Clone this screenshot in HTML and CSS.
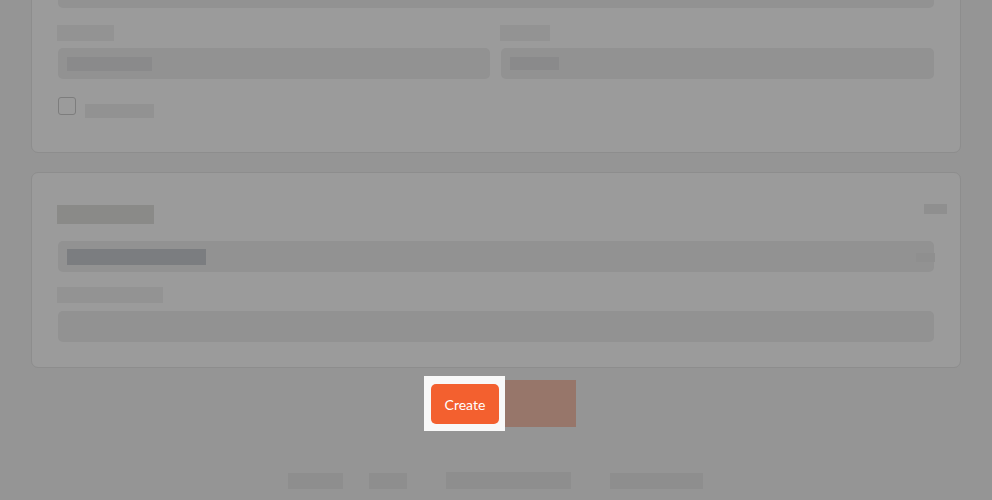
FILE: index.html
```html
<!DOCTYPE html>
<html lang="en">
<head>
<meta charset="utf-8">
<title>Create</title>
<link rel="stylesheet" href="styles.css">
</head>
<body>
<div class="page">
  <section class="card card-top">
    <div class="input full"></div>
    <div class="grid2">
      <div class="field">
        <div class="label lw1"></div>
        <div class="input"><span class="val vw1"></span></div>
      </div>
      <div class="field">
        <div class="label lw2"></div>
        <div class="input"><span class="val vw2"></span></div>
      </div>
    </div>
    <div class="check-row">
      <span class="checkbox"></span>
      <span class="check-label"></span>
    </div>
  </section>

  <section class="card card-second">
    <div class="title-row">
      <div class="title-block"></div>
      <div class="title-side"></div>
    </div>
    <div class="input select"><span class="sel-val"></span><span class="sel-arrow"></span></div>
    <div class="label lw3"></div>
    <div class="input"></div>
  </section>

  <div class="actions">
    <div class="spot"><button class="btn-create">Create</button></div>
    <div class="btn-next"></div>
  </div>

  <footer class="footer">
    <span class="fb f1"></span>
    <span class="fb f2"></span>
    <span class="fb f3"></span>
    <span class="fb f4"></span>
  </footer>
</div>
</body>
</html>
```

FILE: styles.css
```css
* { box-sizing: border-box; }
html, body { margin: 0; padding: 0; }
body {
  background: #959595;
  font-family: Lato, "Liberation Sans", sans-serif;
  width: 992px;
  height: 500px;
  overflow: hidden;
}
.page {
  padding: 0 31px;
  margin-top: -33px;
}
.card {
  background: #9b9b9b;
  border: 1px solid #8d8d8d;
  border-radius: 7px;
  padding: 0 26px;
}
.card-top {
  padding-top: 9px;
  padding-bottom: 34px;
}
.input {
  height: 31px;
  background: #929292;
  border-radius: 5px;
  display: flex;
  align-items: center;
  padding-left: 9px;
}
.grid2 {
  display: grid;
  grid-template-columns: 432px 433px;
  gap: 11px;
  margin-top: 17px;
}
.label {
  height: 16px;
  background: #939393;
  margin-left: -1px;
  margin-bottom: 7px;
}
.lw1 { width: 57px; }
.lw2 { width: 50px; }
.lw3 { width: 106px; margin-bottom: 8px; }
.val { display: block; height: 14px; background: #8a8a8b; }
.vw1 { width: 85px; }
.vw2 { width: 49px; height: 13px; }
.check-row {
  display: flex;
  align-items: flex-start;
  margin-top: 18px;
  height: 21px;
}
.checkbox {
  width: 18px;
  height: 18px;
  border: 1px solid #7d7d7d;
  border-radius: 3px;
}
.check-label {
  width: 69px;
  height: 14px;
  background: #929292;
  margin: 7px 0 0 9px;
}
.card-second {
  margin-top: 19px;
  padding-top: 32px;
  padding-bottom: 25px;
}
.title-row {
  display: flex;
  justify-content: space-between;
  align-items: flex-start;
  height: 19px;
  margin-bottom: 17px;
}
.title-block {
  width: 97px;
  height: 19px;
  background: #8a8a88;
  margin-left: -1px;
}
.title-side {
  width: 23px;
  height: 10px;
  background: #8f8f8f;
  margin-top: -1px;
  margin-right: -13px;
}
.select {
  position: relative;
  justify-content: space-between;
  margin-bottom: 15px;
}
.sel-val { width: 139px; height: 16px; background: #7b7d80; }
.sel-arrow { width: 19px; height: 9px; background: #8f8f8f; margin-right: -1px; margin-top: 1px; }
.actions {
  display: flex;
  justify-content: center;
  align-items: center;
  margin-top: 8px;
  padding-left: 8px;
}
.spot {
  background: #f8f8f8;
  padding: 8px 6px 7px 7px;
}
.btn-create {
  display: block;
  width: 68px;
  height: 40px;
  border: 0;
  border-radius: 5px;
  background: #f3602f;
  color: #ffffff;
  font-family: Lato, "Liberation Sans", sans-serif;
  font-size: 14px;
  padding: 0;
  margin: 0;
}
.btn-next {
  width: 71px;
  height: 47px;
  background: #97766a;
}
.footer {
  display: flex;
  justify-content: center;
  align-items: center;
  gap: 0;
  margin-top: 41px;
}
.fb { display: block; background: #8e8e8e; height: 16px; }
.f1 { width: 55px; margin-left: -2px; }
.f2 { width: 38px; margin-left: 26px; }
.f3 { width: 125px; margin-left: 39px; height: 17px; }
.f4 { width: 93px; margin-left: 39px; }
```
